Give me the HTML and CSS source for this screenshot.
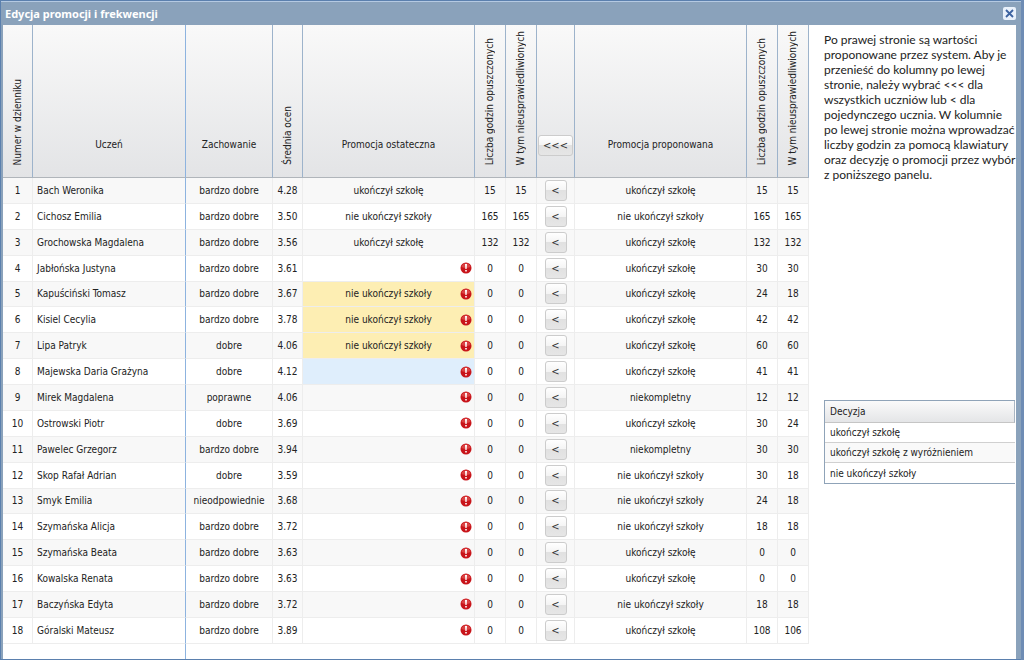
FILE: index.html
```html
<!DOCTYPE html>
<html lang="pl">
<head>
<meta charset="UTF-8" />
<meta name="viewport" content="width=device-width, initial-scale=1" />
<title>Edycja promocji i frekwencji</title>
<link rel="stylesheet" href="styles.css">
</head>
<body>

<div class="window">
  <header class="titlebar">
    <h1>Edycja promocji i frekwencji</h1>
    <button class="close" type="button" aria-label="Zamknij">
      <svg width="9" height="9" viewBox="0 0 9 9"><path d="M1 1L8 8M8 1L1 8" stroke="#3c62a0" stroke-width="1.800" fill="none"/></svg>
    </button>
  </header>

  <main class="content">
    <table class="grid">
      <colgroup>
        <col class="c-num"><col class="c-name"><col class="c-behav"><col class="c-num">
        <col class="c-promo"><col class="c-hours"><col class="c-hours"><col class="c-copy">
        <col class="c-promo"><col class="c-hours"><col class="c-hours">
      </colgroup>
      <thead>
        <tr>
          <th class="tall"><span>Numer w dzienniku</span></th>
          <th class="frozen">Uczeń</th>
          <th>Zachowanie</th>
          <th class="tall"><span>Średnia ocen</span></th>
          <th>Promocja ostateczna</th>
          <th class="tall"><span>Liczba godzin opuszczonych</span></th>
          <th class="tall"><span>W tym nieusprawiedliwionych</span></th>
          <th class="copy"><button class="btn btn-all" type="button">&lt;&lt;&lt;</button></th>
          <th>Promocja proponowana</th>
          <th class="tall"><span>Liczba godzin opuszczonych</span></th>
          <th class="tall"><span>W tym nieusprawiedliwionych</span></th>
        </tr>
      </thead>
      <tbody id="rows"></tbody>
      <tfoot>
        <tr><td></td><td class="frozen"></td><td colspan="9"></td></tr>
      </tfoot>
    </table>

    <aside class="side">
      <p class="help">
        Po prawej stronie są wartości<br>
        proponowane przez system. Aby je<br>
        przenieść do kolumny po lewej<br>
        stronie, należy wybrać &lt;&lt;&lt; dla<br>
        wszystkich uczniów lub &lt; dla<br>
        pojedynczego ucznia. W kolumnie<br>
        po lewej stronie można wprowadzać<br>
        liczby godzin za pomocą klawiatury<br>
        oraz decyzję o promocji przez wybór<br>
        z poniższego panelu.
      </p>
      <table class="decision">
        <thead><tr><th>Decyzja</th></tr></thead>
        <tbody>
          <tr><td>ukończył szkołę</td></tr>
          <tr><td>ukończył szkołę z wyróżnieniem</td></tr>
          <tr><td>nie ukończył szkoły</td></tr>
        </tbody>
      </table>
    </aside>
  </main>
</div>

<script src="script.js"></script>
</body>
</html>
```
FILE: styles.css
```css
* {
  box-sizing: border-box;
}
body {
  margin: 0;
  font-family: Tahoma, "DejaVu Sans Condensed", "DejaVu Sans", sans-serif;
  font-size: 10px;
  color: #222;
  background: #6e8cb4;
}
table {
  border-collapse: separate;
  border-spacing: 0;
}
.window {
  display: flex;
  flex-direction: column;
  min-height: 100vh;
  margin-right: 3px;
  border: solid #5b80ae;
  border-width: 1px 0 1px 1px;
  background: #8aa2bb;
}
.titlebar {
  display: flex;
  align-items: center;
  justify-content: space-between;
  height: 24px;
  padding: 0 5px 0 4px;
  border-top: 1px solid #b4c9e2;
}
h1 {
  margin: 0;
  font-family: Tahoma, "Noto Sans", sans-serif;
  font-size: 11px;
  line-height: 16px;
  color: #fff;
}
.close {
  display: flex;
  align-items: center;
  justify-content: center;
  width: 13px;
  height: 13px;
  padding: 0;
  border: 0;
  border-radius: 2px;
  background: #e9f1fb;
}
.content {
  flex: 1;
  display: flex;
  margin: 0 5px 0 2px;
  background: #fff;
}

/* students grid */
.grid {
  table-layout: fixed;
  flex: none;
  width: 806px;
  text-align: center;
}
.c-num { width: 30px; }
.c-name { width: 153px; }
.c-behav { width: 87px; }
.c-promo { width: 172px; }
.c-hours { width: 31px; }
.c-copy { width: 38px; }
.grid th {
  height: 153px;
  padding: 0 0 24px;
  vertical-align: bottom;
  font-weight: normal;
  line-height: 16px;
  border-right: 1px solid #9db3cb;
  border-bottom: 1px solid #b0b5ba;
  background: linear-gradient(#f9f9f9, #e3e4e6);
}
.grid .tall {
  padding: 0 0 12px;
}
.grid .copy {
  padding-bottom: 21px;
}
.tall span {
  display: block;
  width: 16px;
  margin: 0 auto;
  writing-mode: vertical-rl;
  transform: rotate(180deg);
  white-space: nowrap;
}
.grid td {
  height: 25px;
  padding: 0;
  border-right: 1px solid #ededed;
  border-bottom: 1px solid #ededed;
  white-space: nowrap;
}
.grid tbody tr:nth-child(odd) {
  background: #f8f8f8;
}
.grid td.name {
  padding-left: 4px;
  text-align: left;
}
.grid .frozen,
.grid td.frozen {
  border-right: 1px solid #8db3df;
}
.grid td.promo {
  position: relative;
}
.grid td.changed {
  background: #fdeeb3;
}
.grid td.selected {
  background: #dfeefc;
}
.grid tfoot td {
  height: 15px;
  border-bottom: 0;
  border-right-color: transparent;
}
.grid tfoot td.frozen {
  border-right-color: #8db3df;
}
.alert {
  position: absolute;
  right: 2px;
  top: 50%;
  margin-top: -6px;
}
.btn {
  display: block;
  width: 22px;
  height: 21px;
  margin: 0 auto;
  padding: 0;
  border: 1px solid #ccc;
  border-radius: 3px;
  font: inherit;
  font-size: 11px;
  color: #333;
  background: linear-gradient(#fff, #f4f4f4 50%, #e1e1e1 50%, #e6e6e6);
}
.btn-all {
  width: 35px;
}

/* right panel */
.side {
  flex: 1;
  min-width: 0;
  padding: 7px 1px 0 15px;
}
.help {
  min-height: 368px;
  margin: 0;
  font-family: Tahoma, Lato, sans-serif;
  font-size: 12px;
  line-height: 15px;
  white-space: nowrap;
}
.decision {
  width: 100%;
  border: 1px solid #8fa3b8;
  border-right-width: 0;
  text-align: left;
}
.decision th {
  height: 22px;
  padding: 0 5px;
  font-weight: normal;
  border-bottom: 1px solid #c5c5c5;
  border-right: 1px solid #a9b5c2;
  background: linear-gradient(#fafafa, #e4e5e7);
}
.decision td {
  height: 20px;
  padding: 0 5px;
  border-bottom: 1px solid #d0d0d0;
}
.decision tr:last-child td {
  border-bottom: 0;
}
.decision tr:nth-child(2) {
  background: #f9f9f9;
}
```
FILE: script.js
```js
const yes = 'ukończył szkołę';
const no = 'nie ukończył szkoły';
const inc = 'niekompletny';

// name, behaviour, average, final decision, hours, unexcused, proposed decision, hours, unexcused, state
const students = [
  ['Bach Weronika', 'bardzo dobre', '4.28', yes, 15, 15, yes, 15, 15, 'done'],
  ['Cichosz Emilia', 'bardzo dobre', '3.50', no, 165, 165, no, 165, 165, 'done'],
  ['Grochowska Magdalena', 'bardzo dobre', '3.56', yes, 132, 132, yes, 132, 132, 'done'],
  ['Jabłońska Justyna', 'bardzo dobre', '3.61', '', 0, 0, yes, 30, 30, ''],
  ['Kapuściński Tomasz', 'bardzo dobre', '3.67', no, 0, 0, yes, 24, 18, 'changed'],
  ['Kisiel Cecylia', 'bardzo dobre', '3.78', no, 0, 0, yes, 42, 42, 'changed'],
  ['Lipa Patryk', 'dobre', '4.06', no, 0, 0, yes, 60, 60, 'changed'],
  ['Majewska Daria Grażyna', 'dobre', '4.12', '', 0, 0, yes, 41, 41, 'selected'],
  ['Mirek Magdalena', 'poprawne', '4.06', '', 0, 0, inc, 12, 12, ''],
  ['Ostrowski Piotr', 'dobre', '3.69', '', 0, 0, yes, 30, 24, ''],
  ['Pawelec Grzegorz', 'bardzo dobre', '3.94', '', 0, 0, inc, 30, 30, ''],
  ['Skop Rafał Adrian', 'dobre', '3.59', '', 0, 0, no, 30, 18, ''],
  ['Smyk Emilia', 'nieodpowiednie', '3.68', '', 0, 0, no, 24, 18, ''],
  ['Szymańska Alicja', 'bardzo dobre', '3.72', '', 0, 0, no, 18, 18, ''],
  ['Szymańska Beata', 'bardzo dobre', '3.63', '', 0, 0, yes, 0, 0, ''],
  ['Kowalska Renata', 'bardzo dobre', '3.63', '', 0, 0, yes, 0, 0, ''],
  ['Baczyńska Edyta', 'bardzo dobre', '3.72', '', 0, 0, no, 18, 18, ''],
  ['Góralski Mateusz', 'bardzo dobre', '3.89', '', 0, 0, yes, 108, 106, '']
];

const alertIcon = `<svg class="alert" width="12" height="12" viewBox="0 0 12 12">
  <circle cx="6" cy="6" r="5.5" fill="#c8141a"/>
  <path d="M1.5 5a4.600 4.600 0 0 1 9 0q-4.500 2-9 0z" fill="#e8625f" opacity=".6"/>
  <path d="M5 2h2l-.4 5H5.400zM5.200 8h1.600v1.600H5.200z" fill="#fff"/>
</svg>`;

document.getElementById('rows').innerHTML = students.map((s, i) => `
  <tr>
    <td>${i + 1}</td>
    <td class="name frozen">${s[0]}</td>
    <td>${s[1]}</td>
    <td>${s[2]}</td>
    <td class="promo ${s[9]}">${s[3]}${s[9] === 'done' ? '' : alertIcon}</td>
    <td>${s[4]}</td>
    <td>${s[5]}</td>
    <td><button class="btn" type="button">&lt;</button></td>
    <td>${s[6]}</td>
    <td>${s[7]}</td>
    <td>${s[8]}</td>
  </tr>`).join('');
```
